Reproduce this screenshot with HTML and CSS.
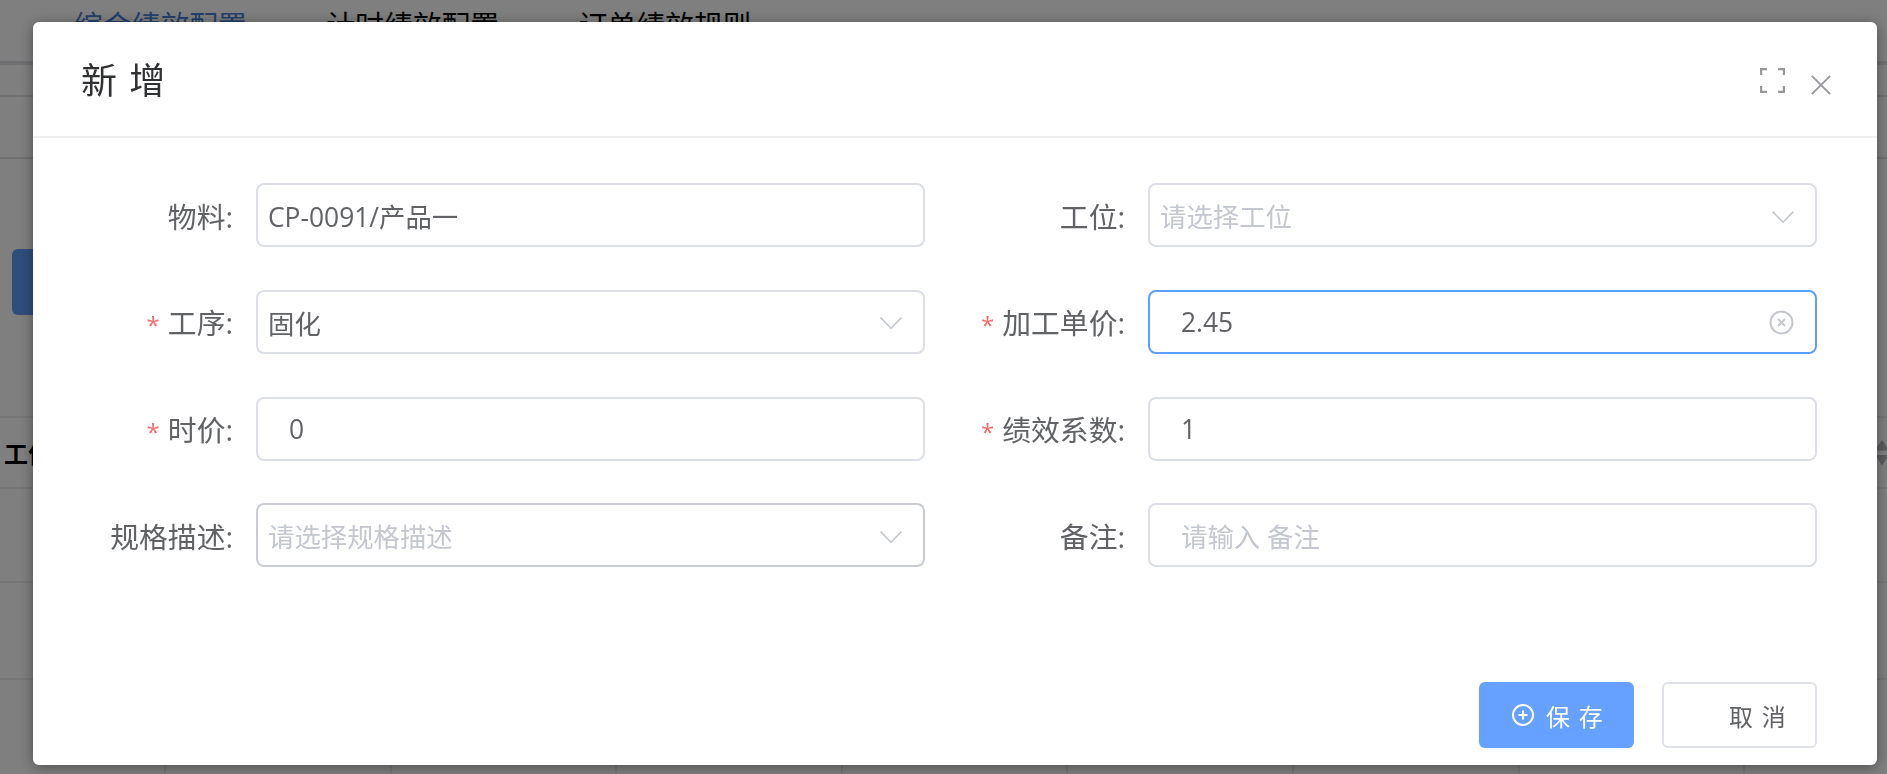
FILE: index.html
```html
<!DOCTYPE html>
<html lang="zh-CN">
<head>
<meta charset="utf-8">
<title>新增</title>
<link rel="stylesheet" href="styles.css">
</head>
<body>
<div class="page">
  <nav class="tabs">
    <span class="tab tab-active">综合绩效配置</span>
    <span class="tab">计时绩效配置</span>
    <span class="tab">订单绩效规则</span>
  </nav>
  <div class="bar bar-a"></div>
  <div class="bar bar-b"><span class="page-btn"></span></div>
  <div class="thead"><span class="th">工位</span><span class="sort"></span></div>
  <div class="trow trow-a"></div>
  <div class="trow trow-b"></div>
  <div class="tcols">
    <i></i><i></i><i></i><i></i><i></i><i></i><i></i><i></i>
  </div>
</div>

<div class="overlay">
  <section class="modal">
    <header class="modal-head">
      <h1 class="modal-title">新 增</h1>
      <svg class="icon-full" viewBox="0 0 25 25" width="25" height="25" fill="none" stroke="#97979c" stroke-width="2.2"><path d="M1.1 7V1.1H7M18 1.1h5.900V7M23.900 18v5.900H18M7 23.900H1.100V18"/></svg>
      <svg class="icon-close" viewBox="0 0 20 20" width="20" height="20" fill="none" stroke="#97979c" stroke-width="1.8"><path d="M.8.8l18.400 18.400M19.200.8.800 19.200"/></svg>
    </header>
    <form class="form">
      <div class="field">
        <label class="label">物料:</label>
        <div class="input"><span class="value">CP-0091/产品一</span></div>
      </div>
      <div class="field">
        <label class="label">工位:</label>
        <div class="input"><span class="placeholder">请选择工位</span><svg class="chevron" viewBox="0 0 22 12" width="22" height="12" fill="none" stroke="#c4c7ce" stroke-width="1.600"><path d="M.6.6 11 11.200 21.400.6"/></svg></div>
      </div>
      <div class="field">
        <label class="label"><span class="req">*</span>工序:</label>
        <div class="input"><span class="value">固化</span><svg class="chevron" viewBox="0 0 22 12" width="22" height="12" fill="none" stroke="#c4c7ce" stroke-width="1.600"><path d="M.6.6 11 11.200 21.400.6"/></svg></div>
      </div>
      <div class="field">
        <label class="label"><span class="req">*</span>加工单价:</label>
        <div class="input input-focus input-num"><span class="value">2.45</span><svg class="clear" viewBox="0 0 25 25" width="25" height="25" fill="none" stroke="#c4c7ce" stroke-width="2"><circle cx="12.500" cy="12.500" r="11"/><path d="m9 9 7 7M16 9l-7 7"/></svg></div>
      </div>
      <div class="field">
        <label class="label"><span class="req">*</span>时价:</label>
        <div class="input input-num"><span class="value">0</span></div>
      </div>
      <div class="field">
        <label class="label"><span class="req">*</span>绩效系数:</label>
        <div class="input input-num"><span class="value">1</span></div>
      </div>
      <div class="field">
        <label class="label">规格描述:</label>
        <div class="input input-dark"><span class="placeholder">请选择规格描述</span><svg class="chevron" viewBox="0 0 22 12" width="22" height="12" fill="none" stroke="#c4c7ce" stroke-width="1.600"><path d="M.6.6 11 11.200 21.400.6"/></svg></div>
      </div>
      <div class="field">
        <label class="label">备注:</label>
        <div class="input input-num"><span class="placeholder">请输入 备注</span></div>
      </div>
    </form>
    <footer class="modal-foot">
      <button class="btn btn-primary" type="button"><svg class="btn-icon" viewBox="0 0 22 22" width="22" height="22" fill="none" stroke="#fff" stroke-width="2"><circle cx="11" cy="11" r="10"/><path d="M11 6.500v9M6.500 11h9"/></svg>保 存</button>
      <button class="btn btn-plain" type="button">取 消</button>
    </footer>
  </section>
</div>
</body>
</html>
```

FILE: styles.css
```css
* { box-sizing: border-box; }

html, body {
  margin: 0;
  height: 100%;
  overflow: hidden;
}

body {
  font-family: "Open Sans", "Noto Sans CJK SC", sans-serif;
  background: #fff;
  color: #606266;
}

/* page behind the dialog */
.page {
  height: 774px;
  display: flex;
  flex-direction: column;
  overflow: hidden;
}

.tabs {
  height: 65px;
  padding: 5px 0 0 74px;
  display: flex;
  gap: 79.500px;
  border-bottom: 4px solid #dfdfe4;
  flex: none;
}

.tab {
  font-size: 28.800px;
  line-height: 40px;
  color: #000;
}

.tab-active { color: #4a80d8; }

.bar { flex: none; border-bottom: 2px solid #dfdfe4; }
.bar-a { height: 32px; }
.bar-b {
  height: 62px;
  position: relative;
}

.page-btn {
  position: absolute;
  left: 12px;
  top: 152px;
  width: 80px;
  height: 66px;
  border-radius: 6px;
  background: #5f9af7;
}

.thead {
  margin-top: 257px;
  height: 73px;
  flex: none;
  border-top: 2px solid #ececf0;
  border-bottom: 2px solid #ececf0;
  display: flex;
  align-items: center;
  justify-content: space-between;
  padding-left: 4px;
}

.th {
  font-size: 24px;
  font-weight: 700;
  color: #000;
}

.sort {
  width: 10px;
  display: flex;
  flex-direction: column;
  gap: 4px;
}

.sort::before,
.sort::after {
  content: "";
  height: 11px;
  background: #b8b8c0;
}

.sort::before { clip-path: polygon(50% 0, 100% 70%, 100% 100%, 0 100%, 0 70%); }
.sort::after { clip-path: polygon(0 0, 100% 0, 100% 30%, 50% 100%, 0 30%); }

.trow { flex: none; border-bottom: 2px solid #ececf0; }
.trow-a { height: 94px; }
.trow-b { height: 97px; }

.tcols {
  flex: 1;
  display: grid;
  grid-template-columns: 166px repeat(7, 225.600px);
}

.tcols i { border-right: 2px solid #ececf0; }

/* dialog */
.overlay {
  position: fixed;
  inset: 0;
  background: rgba(0, 0, 0, .5);
  padding: 22px 10px 9px 33px;
  display: flex;
}

.modal {
  flex: 1;
  display: flex;
  flex-direction: column;
  background: #fff;
  border-radius: 6px;
  box-shadow: 0 2px 14px rgba(0, 0, 0, .4);
}

.modal-head {
  height: 116px;
  flex: none;
  display: flex;
  align-items: center;
  padding: 4px 46px 0 48px;
  border-bottom: 2px solid #eff0f2;
}

.modal-title {
  margin: 0 auto 0 0;
  font-size: 36px;
  font-weight: 400;
  letter-spacing: 1.500px;
  line-height: 48px;
  color: #303133;
}

.icon-full { margin-right: 26px; margin-top: -2px; }
.icon-close { margin-top: 8px; }

.form {
  padding: 45px 60px 0 0;
  display: grid;
  grid-template-columns: 1fr 1fr;
  row-gap: 42.800px;
}

.field {
  display: flex;
  align-items: center;
}

.label {
  flex: none;
  width: 200px;
  margin-right: 23px;
  text-align: right;
  font-size: 28.800px;
  color: #606266;
  white-space: nowrap;
}

.req {
  color: #f56c6c;
  font-size: 24px;
  margin-right: 8px;
}

.input {
  flex: 1;
  height: 64px;
  display: flex;
  align-items: center;
  justify-content: space-between;
  padding: 1px 21px 0 10px;
  border: 2px solid #dcdfe6;
  border-radius: 8px;
  font-size: 26.400px;
}

.input-num { padding-left: 31px; }
.input-focus { border-color: #5e9eff; }
.input-dark { border-color: #c9ccd3; }

.value { color: #606266; }
.placeholder { color: #c4c7d0; }

.chevron { margin-top: 2px; }

.modal-foot {
  margin-top: auto;
  padding: 0 60px 17px 0;
  display: flex;
  justify-content: flex-end;
  gap: 28px;
}

.btn {
  width: 155px;
  height: 66px;
  display: flex;
  align-items: center;
  font-family: inherit;
  font-size: 24px;
  letter-spacing: 1.200px;
  border-radius: 6px;
}

.btn-primary {
  background: #66a1ff;
  border: 0;
  color: #fff;
  padding: 0 0 0 33px;
}

.btn-icon { margin-right: 12px; flex: none; }

.btn-plain {
  background: #fff;
  border: 2px solid #dfe2e8;
  color: #606266;
  padding: 0 0 0 65px;
}
```
